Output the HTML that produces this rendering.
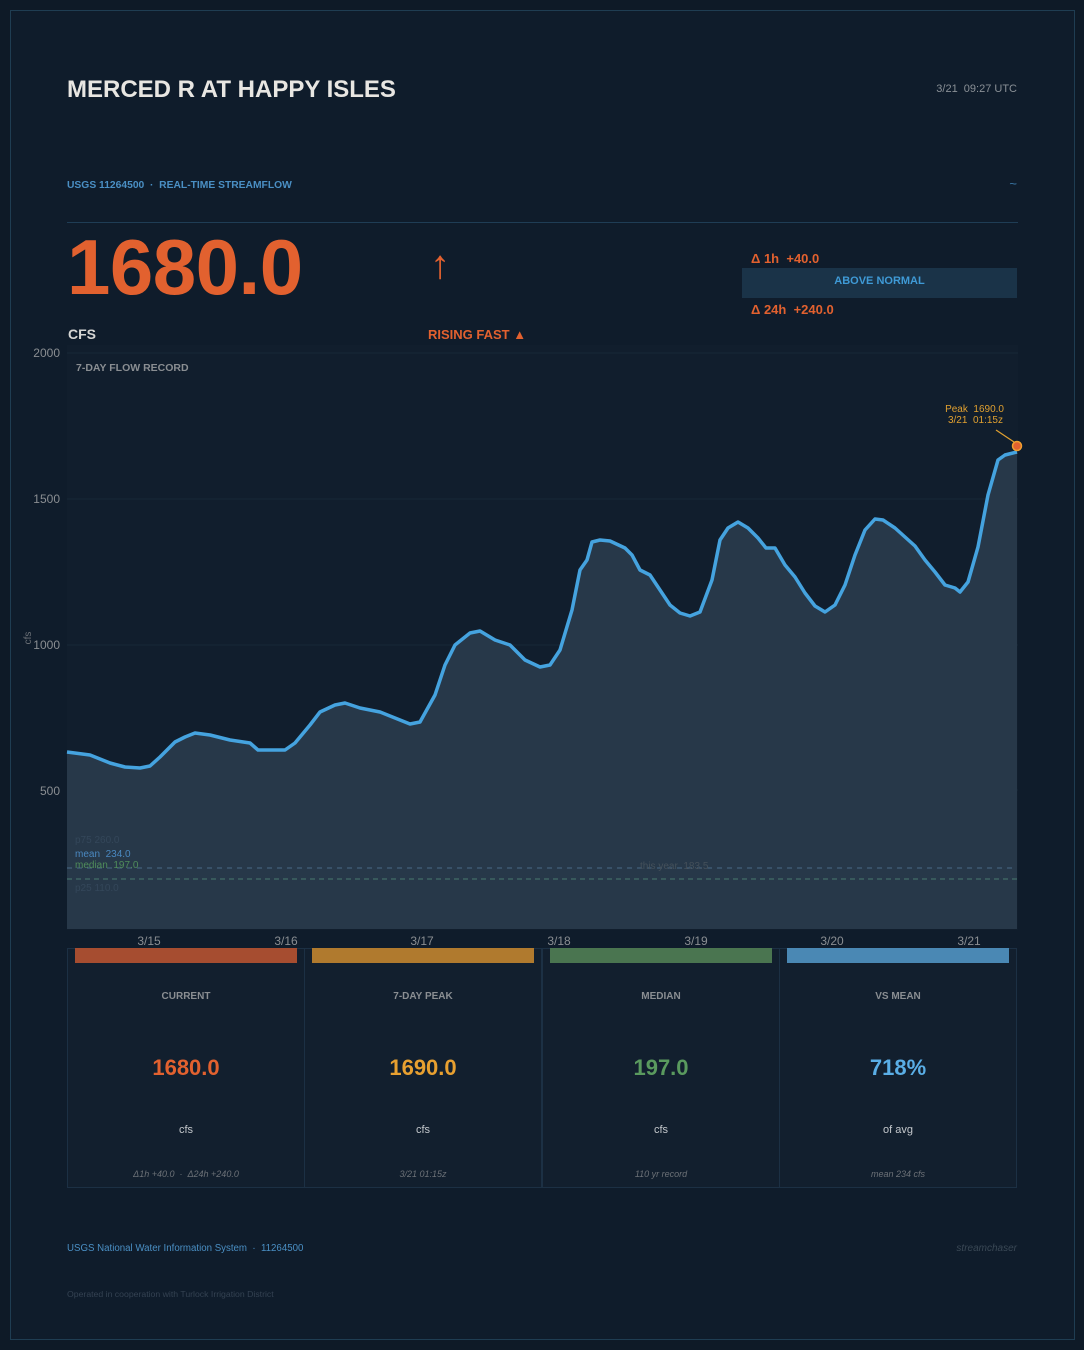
<!DOCTYPE html>
<html><head><meta charset="utf-8"><style>
*{margin:0;padding:0;box-sizing:border-box}
body{width:1084px;height:1350px;background:#0e1a27;font-family:"Liberation Sans",sans-serif;position:relative;overflow:hidden}
.frame{position:absolute;left:10px;top:10px;width:1065px;height:1330px;border:1px solid #1f3d52;background:#0f1c2b}
.a{position:absolute;white-space:nowrap}
.card{position:absolute;top:948px;width:238px;height:240px;border:1px solid #1c3044;background:#121f2e}
.card .bar{position:absolute;left:7px;top:-1px;height:15px;right:7px}
.card .t{position:absolute;top:42px;width:100%;text-align:center;font-size:10px;font-weight:bold;color:#8a8e92}
.card .v{position:absolute;top:106px;width:100%;text-align:center;font-size:22px;font-weight:bold}
.card .u{position:absolute;top:175px;width:100%;text-align:center;font-size:11px;color:#c4c8cc}
.card .f{position:absolute;top:220px;width:100%;text-align:center;font-size:9px;font-style:italic;color:#6c7177}
</style></head><body>
<div class="frame"></div>
<div class="a" style="left:67px;top:76px;font-size:24px;font-weight:bold;color:#e8e6e2">MERCED R AT HAPPY ISLES</div>
<div class="a" style="right:67px;top:83px;font-size:11px;color:#8a9096">3/21&nbsp; 09:27 UTC</div>
<div class="a" style="left:67px;top:180px;font-size:10.3px;font-weight:bold;color:#4a8fc4">USGS 11264500 &nbsp;·&nbsp; REAL-TIME STREAMFLOW</div>
<div class="a" style="right:67px;top:176px;font-size:13px;color:#3a78a8">~</div>
<div class="a" style="left:67px;top:222px;width:951px;height:1px;background:#1f3d55"></div>
<div class="a" style="left:67px;top:222px;font-size:78px;font-weight:bold;color:#e2612f;letter-spacing:-0.5px">1680.0</div>
<div class="a" style="left:430px;top:243px;font-size:40px;color:#e2612f">↑</div>
<div class="a" style="left:751px;top:251px;font-size:13px;font-weight:bold;color:#e2612f">Δ 1h&nbsp; +40.0</div>
<div class="a" style="left:742px;top:268px;width:275px;height:30px;background:#1a3348;color:#3f9ad6;font-size:11px;font-weight:bold;text-align:center;line-height:27px">ABOVE NORMAL</div>
<div class="a" style="left:751px;top:302px;font-size:13px;font-weight:bold;color:#e2612f">Δ 24h&nbsp; +240.0</div>
<div class="a" style="left:68px;top:326px;font-size:14px;font-weight:bold;color:#d6d6d4">CFS</div>
<div class="a" style="left:428px;top:327px;font-size:13px;font-weight:bold;color:#e2612f">RISING FAST ▲</div>

<svg class="a" style="left:0;top:0" width="1084" height="960">
<rect x="67" y="345" width="951" height="585" fill="#111e2d"/>
<g stroke="#172838" stroke-width="1"><line x1="67" y1="353" x2="1018" y2="353"/><line x1="67" y1="499" x2="1018" y2="499"/><line x1="67" y1="645" x2="1018" y2="645"/><line x1="67" y1="790" x2="1018" y2="790"/></g>
<g font-size="12" fill="#8a8e92" text-anchor="end" font-family="Liberation Sans"><text x="60" y="357">2000</text><text x="60" y="503">1500</text><text x="60" y="649">1000</text><text x="60" y="795">500</text></g>
<text x="31" y="638" font-size="10" fill="#6c7177" transform="rotate(-90 31 638)" text-anchor="middle">cfs</text>
<text x="76" y="371" font-size="10.5" font-weight="bold" fill="#8a8e92">7-DAY FLOW RECORD</text>
<path id="ln" d="M67,752 L90,755 L110,763 L125,767 L140,768 L150,766 L160,757 L175,742 L185,737 L195,733 L210,735 L230,740 L250,743 L258,750 L268,750 L285,750 L295,743 L310,725 L320,712 L335,705 L345,703 L360,708 L380,712 L400,720 L410,724 L420,722 L435,695 L445,665 L455,645 L470,633 L480,631 L495,640 L510,645 L525,660 L540,667 L550,665 L560,650 L572,610 L580,570 L587,560 L592,542 L600,540 L610,541 L625,548 L632,555 L640,570 L650,575 L660,590 L670,605 L680,613 L690,616 L700,612 L712,580 L720,540 L728,528 L738,522 L748,528 L758,538 L766,548 L775,548 L785,565 L795,577 L805,593 L815,606 L825,612 L835,605 L845,585 L855,555 L865,530 L875,519 L883,520 L895,528 L905,537 L915,546 L925,560 L935,572 L945,585 L955,588 L960,592 L968,582 L978,547 L988,495 L998,460 L1005,455 L1017,452" fill="none"/>
<path d="M67,752 L90,755 L110,763 L125,767 L140,768 L150,766 L160,757 L175,742 L185,737 L195,733 L210,735 L230,740 L250,743 L258,750 L268,750 L285,750 L295,743 L310,725 L320,712 L335,705 L345,703 L360,708 L380,712 L400,720 L410,724 L420,722 L435,695 L445,665 L455,645 L470,633 L480,631 L495,640 L510,645 L525,660 L540,667 L550,665 L560,650 L572,610 L580,570 L587,560 L592,542 L600,540 L610,541 L625,548 L632,555 L640,570 L650,575 L660,590 L670,605 L680,613 L690,616 L700,612 L712,580 L720,540 L728,528 L738,522 L748,528 L758,538 L766,548 L775,548 L785,565 L795,577 L805,593 L815,606 L825,612 L835,605 L845,585 L855,555 L865,530 L875,519 L883,520 L895,528 L905,537 L915,546 L925,560 L935,572 L945,585 L955,588 L960,592 L968,582 L978,547 L988,495 L998,460 L1005,455 L1017,452 L1017,929 L67,929 Z" fill="#273849"/>
<line x1="67" y1="868" x2="1017" y2="868" stroke="#4a6a88" stroke-dasharray="5,5" stroke-width="1"/>
<line x1="67" y1="879" x2="1017" y2="879" stroke="#4a7a70" stroke-dasharray="5,4" stroke-width="1"/>
<g font-size="10" font-family="Liberation Sans"><text x="75" y="843" fill="#34475a">p75 260.0</text><text x="75" y="857" fill="#4a88c0">mean&nbsp; 234.0</text><text x="75" y="868" fill="#4f8c5a">median&nbsp; 197.0</text><text x="75" y="891" fill="#34475a">p25 110.0</text><text x="640" y="869" fill="#44505a">this year&nbsp; 183.5</text></g>
<use href="#ln" stroke="#45a3df" stroke-width="3.5" stroke-linejoin="round"/>
<line x1="996" y1="430" x2="1014" y2="442" stroke="#e0a030" stroke-width="1.2"/>
<circle cx="1017" cy="446" r="4.5" fill="#e2612f" stroke="#f0a030" stroke-width="1.5"/>
<g font-size="10" fill="#e0a030" text-anchor="end"><text x="1004" y="412">Peak&nbsp; 1690.0</text><text x="1003" y="423">3/21&nbsp; 01:15z</text></g>
<g font-size="12" fill="#8a8e92" text-anchor="middle"><text x="149" y="945">3/15</text><text x="286" y="945">3/16</text><text x="422" y="945">3/17</text><text x="559" y="945">3/18</text><text x="696" y="945">3/19</text><text x="832" y="945">3/20</text><text x="969" y="945">3/21</text></g>
</svg>

<div class="card" style="left:67px"><div class="bar" style="background:#a64d30"></div><div class="t">CURRENT</div><div class="v" style="color:#e2612f">1680.0</div><div class="u">cfs</div><div class="f">Δ1h +40.0 &nbsp;·&nbsp; Δ24h +240.0</div></div>
<div class="card" style="left:304px"><div class="bar" style="background:#b07a2e"></div><div class="t">7-DAY PEAK</div><div class="v" style="color:#e8a030">1690.0</div><div class="u">cfs</div><div class="f">3/21 01:15z</div></div>
<div class="card" style="left:542px"><div class="bar" style="background:#4a7550"></div><div class="t">MEDIAN</div><div class="v" style="color:#5a9a5e">197.0</div><div class="u">cfs</div><div class="f">110 yr record</div></div>
<div class="card" style="left:779px"><div class="bar" style="background:#4a88b4"></div><div class="t">VS MEAN</div><div class="v" style="color:#5aaee6">718%</div><div class="u">of avg</div><div class="f">mean 234 cfs</div></div>

<div class="a" style="left:67px;top:1243px;font-size:9.7px;color:#4a8fc4">USGS National Water Information System &nbsp;·&nbsp; 11264500</div>
<div class="a" style="right:67px;top:1243px;font-size:10px;font-style:italic;color:#3a4855">streamchaser</div>
<div class="a" style="left:67px;top:1289px;font-size:8.7px;color:#344252">Operated in cooperation with Turlock Irrigation District</div>
</body></html>
